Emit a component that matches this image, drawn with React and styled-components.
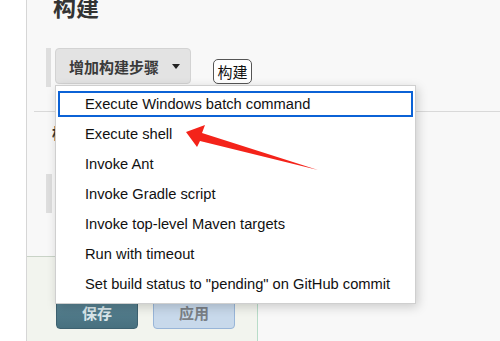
import React from "react";
import styled, { createGlobalStyle } from "styled-components";

const GlobalStyle = createGlobalStyle`
  html, body {
    margin: 0;
    padding: 0;
    width: 500px;
    height: 341px;
    overflow: hidden;
    background: #f8f8f8;
    font-family: "Liberation Sans", Arial, "Noto Sans CJK SC", sans-serif;
  }
`;

const menuItems = [
  "Execute Windows batch command",
  "Execute shell",
  "Invoke Ant",
  "Invoke Gradle script",
  "Invoke top-level Maven targets",
  "Run with timeout",
  'Set build status to "pending" on GitHub commit',
];

export default function App() {
  return (
    <Page>
      <GlobalStyle />
      <Gutter />
      <Main>
        <Title>构建</Title>
        <StepRow>
          <SideBar $h={39} />
          <AddButton>
            增加构建步骤
            <Caret />
          </AddButton>
        </StepRow>
        <Divider />
        <SectionTitle>构建后操作</SectionTitle>
        <StepRow $top={32}>
          <SideBar $h={39} $w={6} />
        </StepRow>
        <BottomBar>
          <SaveButton>保存</SaveButton>
          <ApplyButton>应用</ApplyButton>
        </BottomBar>
      </Main>

      <Tip>构建</Tip>

      <Menu>
        {menuItems.map((label, i) => (
          <MenuItem key={label} $focused={i === 0}>
            {label}
          </MenuItem>
        ))}
      </Menu>

      <Arrow viewBox="0 0 500 341" width="500" height="341">
        <polygon
          points="186,132 205,125 202,133 318,170 200,141 197,147"
          fill="#f4231a"
        />
      </Arrow>
    </Page>
  );
}

const Page = styled.div`
  position: relative;
  display: flex;
  width: 500px;
  height: 341px;
  overflow: hidden;
`;

const Gutter = styled.div`
  width: 26px;
  flex: none;
  background: #ffffff;
  border-right: 1px solid #d6d6d6;
`;

const Main = styled.div`
  flex: 1;
  display: flex;
  flex-direction: column;
  background: #f8f8f8;
`;

const Title = styled.h1`
  margin: -7px 0 0 26px;
  font-family: "Noto Sans CJK SC", sans-serif;
  font-size: 23px;
  line-height: 26px;
  font-weight: 700;
  color: #333;
`;

const StepRow = styled.div`
  display: flex;
  gap: 4px;
  margin: ${(p) => p.$top || 29}px 0 0 19px;
`;

const SideBar = styled.div`
  width: ${(p) => p.$w || 5}px;
  height: ${(p) => p.$h}px;
  background: #dedede;
`;

const AddButton = styled.div`
  display: flex;
  align-items: center;
  gap: 13px;
  height: 36px;
  padding: 0 9px 0 13px;
  box-sizing: border-box;
  width: 136px;
  white-space: nowrap;
  background: #e3e3e3;
  border: 1px solid #d3d3d3;
  border-radius: 4px;
  font-family: "Noto Sans CJK SC", sans-serif;
  font-size: 15px;
  font-weight: 700;
  color: #3a3a3a;
`;

const Caret = styled.span`
  flex: none;
  width: 0;
  height: 0;
  border-left: 4px solid transparent;
  border-right: 4px solid transparent;
  border-top: 5px solid #222;
`;

const Divider = styled.div`
  margin: 24px 0 0 7px;
  height: 1px;
  background: #d9d9d9;
`;

const SectionTitle = styled.div`
  margin: 12px 0 0 25px;
  font-family: "Noto Sans CJK SC", sans-serif;
  font-size: 15px;
  line-height: 18px;
  font-weight: 700;
  color: #333;
`;

const BottomBar = styled.div`
  margin-top: 43px;
  width: 231px;
  flex: 1;
  display: flex;
  gap: 15px;
  padding: 34px 0 0 29px;
  box-sizing: border-box;
  background: #f2f4ee;
  border-top: 1px solid #c9d3c7;
  border-right: 1px solid #b8dcc8;
`;

const BaseButton = styled.div`
  width: 82px;
  height: 38px;
  box-sizing: border-box;
  border-radius: 4px;
  display: flex;
  align-items: center;
  justify-content: center;
  padding-top: 4px;
  font-family: "Noto Sans CJK SC", sans-serif;
  font-size: 15px;
  font-weight: 700;
`;

const SaveButton = styled(BaseButton)`
  background: linear-gradient(#5f8999, #47707f);
  border: 1px solid #3d6170;
  color: #d9e6ea;
`;

const ApplyButton = styled(BaseButton)`
  background: #c8d9eb;
  border: 1px solid #98b5d8;
  color: #7a7f86;
`;

const Tip = styled.div`
  position: absolute;
  left: 213px;
  top: 59px;
  width: 39px;
  height: 25px;
  box-sizing: border-box;
  display: flex;
  align-items: center;
  justify-content: center;
  background: #fff;
  border: 1px solid #555;
  border-radius: 5px;
  font-family: "Noto Sans CJK SC", sans-serif;
  font-size: 15px;
  color: #111;
`;

const Menu = styled.div`
  position: absolute;
  left: 55px;
  top: 85px;
  width: 361px;
  height: 219px;
  box-sizing: border-box;
  padding: 3px 0;
  background: #fff;
  border: 1px solid #cfcfcf;
  box-shadow: 2px 3px 10px rgba(0, 0, 0, 0.18);
`;

const MenuItem = styled.div`
  height: 30px;
  display: flex;
  align-items: center;
  padding-left: 29px;
  font-size: 14.7px;
  color: #111;
  white-space: nowrap;
  outline: ${(p) => (p.$focused ? "2px solid #0b62d6" : "none")};
  outline-offset: -4px;
`;

const Arrow = styled.svg`
  position: absolute;
  left: 0;
  top: 0;
  pointer-events: none;
`;
